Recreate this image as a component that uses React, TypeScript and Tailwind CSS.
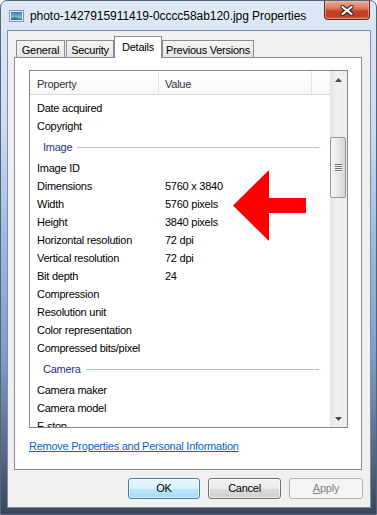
import React from 'react';

type Row = { kind: 'group'; label: string } | { kind: 'prop'; name: string; value?: string };

const rows: Row[] = [
  { kind: 'prop', name: 'Date acquired' },
  { kind: 'prop', name: 'Copyright' },
  { kind: 'group', label: 'Image' },
  { kind: 'prop', name: 'Image ID' },
  { kind: 'prop', name: 'Dimensions', value: '5760 x 3840' },
  { kind: 'prop', name: 'Width', value: '5760 pixels' },
  { kind: 'prop', name: 'Height', value: '3840 pixels' },
  { kind: 'prop', name: 'Horizontal resolution', value: '72 dpi' },
  { kind: 'prop', name: 'Vertical resolution', value: '72 dpi' },
  { kind: 'prop', name: 'Bit depth', value: '24' },
  { kind: 'prop', name: 'Compression' },
  { kind: 'prop', name: 'Resolution unit' },
  { kind: 'prop', name: 'Color representation' },
  { kind: 'prop', name: 'Compressed bits/pixel' },
  { kind: 'group', label: 'Camera' },
  { kind: 'prop', name: 'Camera maker' },
  { kind: 'prop', name: 'Camera model' },
  { kind: 'prop', name: 'F-stop' },
];

function ImageIcon() {
  return (
    <svg width="15" height="12" viewBox="0 0 15 12">
      <defs>
        <linearGradient id="sky" x1="0" y1="0" x2="0" y2="1">
          <stop offset="0" stopColor="#2f7fb8" />
          <stop offset="1" stopColor="#a9d8f2" />
        </linearGradient>
      </defs>
      <rect x="0.5" y="0.5" width="14" height="11" fill="#e8edf2" stroke="#8a98a8" />
      <rect x="2" y="2" width="11" height="8" fill="url(#sky)" />
      <path d="M2 10 L2 8 Q6 6.5 9 8 T13 7.5 L13 10 Z" fill="#2f7d84" />
    </svg>
  );
}

function CloseGlyph() {
  return (
    <svg width="14" height="11" viewBox="0 0 14 11">
      <path d="M2.5 2 L11.5 9 M11.5 2 L2.5 9" stroke="#3b2a28" strokeWidth="4.2" strokeLinecap="round" />
      <path d="M2.5 2 L11.5 9 M11.5 2 L2.5 9" stroke="#ffffff" strokeWidth="2.2" strokeLinecap="round" />
    </svg>
  );
}

function Scrollbar() {
  return (
    <div className="flex w-[17px] flex-col bg-[linear-gradient(90deg,#e4e4e4,#f0f0f0_40%,#ececec)]">
      <div className="flex h-[17px] items-center justify-center">
        <svg width="7" height="4" viewBox="0 0 7 4"><path d="M0 4 L3.5 0 L7 4 Z" fill="#4a4a4a" /></svg>
      </div>
      <div className="mt-[49px] flex h-[61px] w-[16px] items-center justify-center rounded-[2px] border border-[#979797] bg-[linear-gradient(90deg,#f4f4f4,#e9e9e9_50%,#d4d4d4)]">
        <div className="flex flex-col gap-[1px]">
          {[0, 1, 2, 3].map(i => (
            <div key={i} className="h-px w-[7px] bg-[#6e6e6e] shadow-[0_1px_0_#fafafa]" />
          ))}
        </div>
      </div>
      <div className="flex-1" />
      <div className="flex h-[17px] items-center justify-center">
        <svg width="7" height="4" viewBox="0 0 7 4"><path d="M0 0 L7 0 L3.5 4 Z" fill="#4a4a4a" /></svg>
      </div>
    </div>
  );
}

function ListView() {
  return (
    <div className="relative flex h-[358px] w-[319px] border border-[#828790] bg-white">
      <div className="flex-1 overflow-hidden">
        <div className="flex h-[24px] border-b border-[#d5d5d5] bg-[linear-gradient(#ffffff,#f6f7f8)] text-[#2b3340]">
          <div className="w-[129px] border-r border-[#e3e4e6] pl-[7px] pt-[5px]">Property</div>
          <div className="w-[153px] border-r border-[#e3e4e6] pl-[6px] pt-[5px]">Value</div>
        </div>
        <div className="pt-[4px]">
          {rows.map((r, i) =>
            r.kind === 'group' ? (
              <div key={i} className="flex h-[24px] items-center pl-[13px] pr-[11px] pt-[1px]">
                <span className="text-[#1e3287]">{r.label}</span>
                <div className="ml-[5px] h-px flex-1 bg-[#b7c1dc]" />
              </div>
            ) : (
              <div key={i} className="flex h-[18px] items-center text-black">
                <div className="w-[128px] whitespace-nowrap pl-[7px]">{r.name}</div>
                <div className="pl-[7px]">{r.value}</div>
              </div>
            )
          )}
        </div>
      </div>
      <Scrollbar />
      {/* red arrow pointing at the width row */}
      <svg className="absolute left-[203px] top-[99px]" width="74" height="72" viewBox="0 0 74 72">
        <polygon points="0,35.5 36,0 36,28 73,28 73,43 36,43 36,71" fill="#ff0000" />
      </svg>
    </div>
  );
}

function Tab({ label, w, active }: { label: string; w: string; active?: boolean }) {
  if (active) {
    return (
      <div className={`relative z-10 -mb-px flex h-[22px] ${w} justify-center border border-b-0 border-[#898c95] bg-white pt-[2px]`}>
        {label}
      </div>
    );
  }
  return (
    <div className={`flex h-[17px] ${w} justify-center border border-b-0 border-[#898c95] bg-[linear-gradient(#f5f5f5,#e6e6e6)] pt-[1px]`}>
      {label}
    </div>
  );
}

export default function App() {
  return (
    <div className="h-[515px] w-[377px] overflow-hidden bg-white font-['Liberation_Sans',Arial,sans-serif]">
      <div className="flex h-[515px] w-[377px] flex-col rounded-t-[7px] border border-[#55667c] bg-[linear-gradient(#dde8f5_0%,#cbdcf0_25%,#9fbde2_45%,#7f9cc4_70%,#4d5e77_92%,#39475a_100%)]">
        <div className="flex h-[29px] items-start">
          <div className="flex h-[29px] flex-1 items-center pl-[8px]">
            <ImageIcon />
            <span className="ml-[6px] text-[12px] tracking-[-0.05px] text-black [text-shadow:0_0_6px_#ffffff]">
              photo-1427915911419-0cccc58ab120.jpg Properties
            </span>
          </div>
          <div className="mr-[6px] flex h-[19px] w-[46px] items-center justify-center rounded-b-[4px] border border-t-0 border-[#5c2a22] bg-[linear-gradient(#e9a899_0%,#dc7a62_40%,#c8432a_55%,#c23a22_80%,#d6603f_100%)] shadow-[inset_0_0_0_1px_rgba(255,210,200,0.45)]">
            <CloseGlyph />
          </div>
        </div>

        <div className="ml-[6px] flex h-[478px] w-[364px] flex-col border border-[#7d8ea5] bg-[#f0f0f0] pl-[6px] pt-[6px] text-[11px] tracking-[-0.25px] text-black">
          <div className="flex h-[20px] items-end pl-[2px]">
            <Tab label="General" w="w-[49px]" />
            <div className="ml-[1px]"><Tab label="Security" w="w-[48px]" /></div>
            <Tab label="Details" w="w-[48px]" active />
            <Tab label="Previous Versions" w="w-[92px]" />
          </div>
          <div className="flex h-[413px] w-[348px] flex-col border border-[#898c95] bg-white pl-[14px] pt-[12px]">
            <ListView />
            <a className="mt-[11px] w-fit leading-[15px] text-[#0066cc] underline">Remove Properties and Personal Information</a>
          </div>
          <div className="mt-[8px] flex h-[21px] w-[349px] justify-end gap-[8px]">
            <button className="w-[72px] rounded-[3px] border border-[#3c7fb1] bg-[linear-gradient(#eaf6fd_0%,#d9f0fc_50%,#bee6fd_51%,#a7d9f5_100%)] text-black shadow-[inset_0_0_0_1px_rgba(255,255,255,0.6)]">
              OK
            </button>
            <button className="w-[73px] rounded-[3px] border border-[#707070] bg-[linear-gradient(#f2f2f2_0%,#ebebeb_50%,#dddddd_51%,#cfcfcf_100%)] text-black shadow-[inset_0_0_0_1px_rgba(255,255,255,0.7)]">
              Cancel
            </button>
            <button className="w-[74px] rounded-[3px] border border-[#adb2b5] bg-[#f4f4f4] text-[#838383]">
              <span className="underline">A</span>pply
            </button>
          </div>
        </div>
      </div>
    </div>
  );
}
